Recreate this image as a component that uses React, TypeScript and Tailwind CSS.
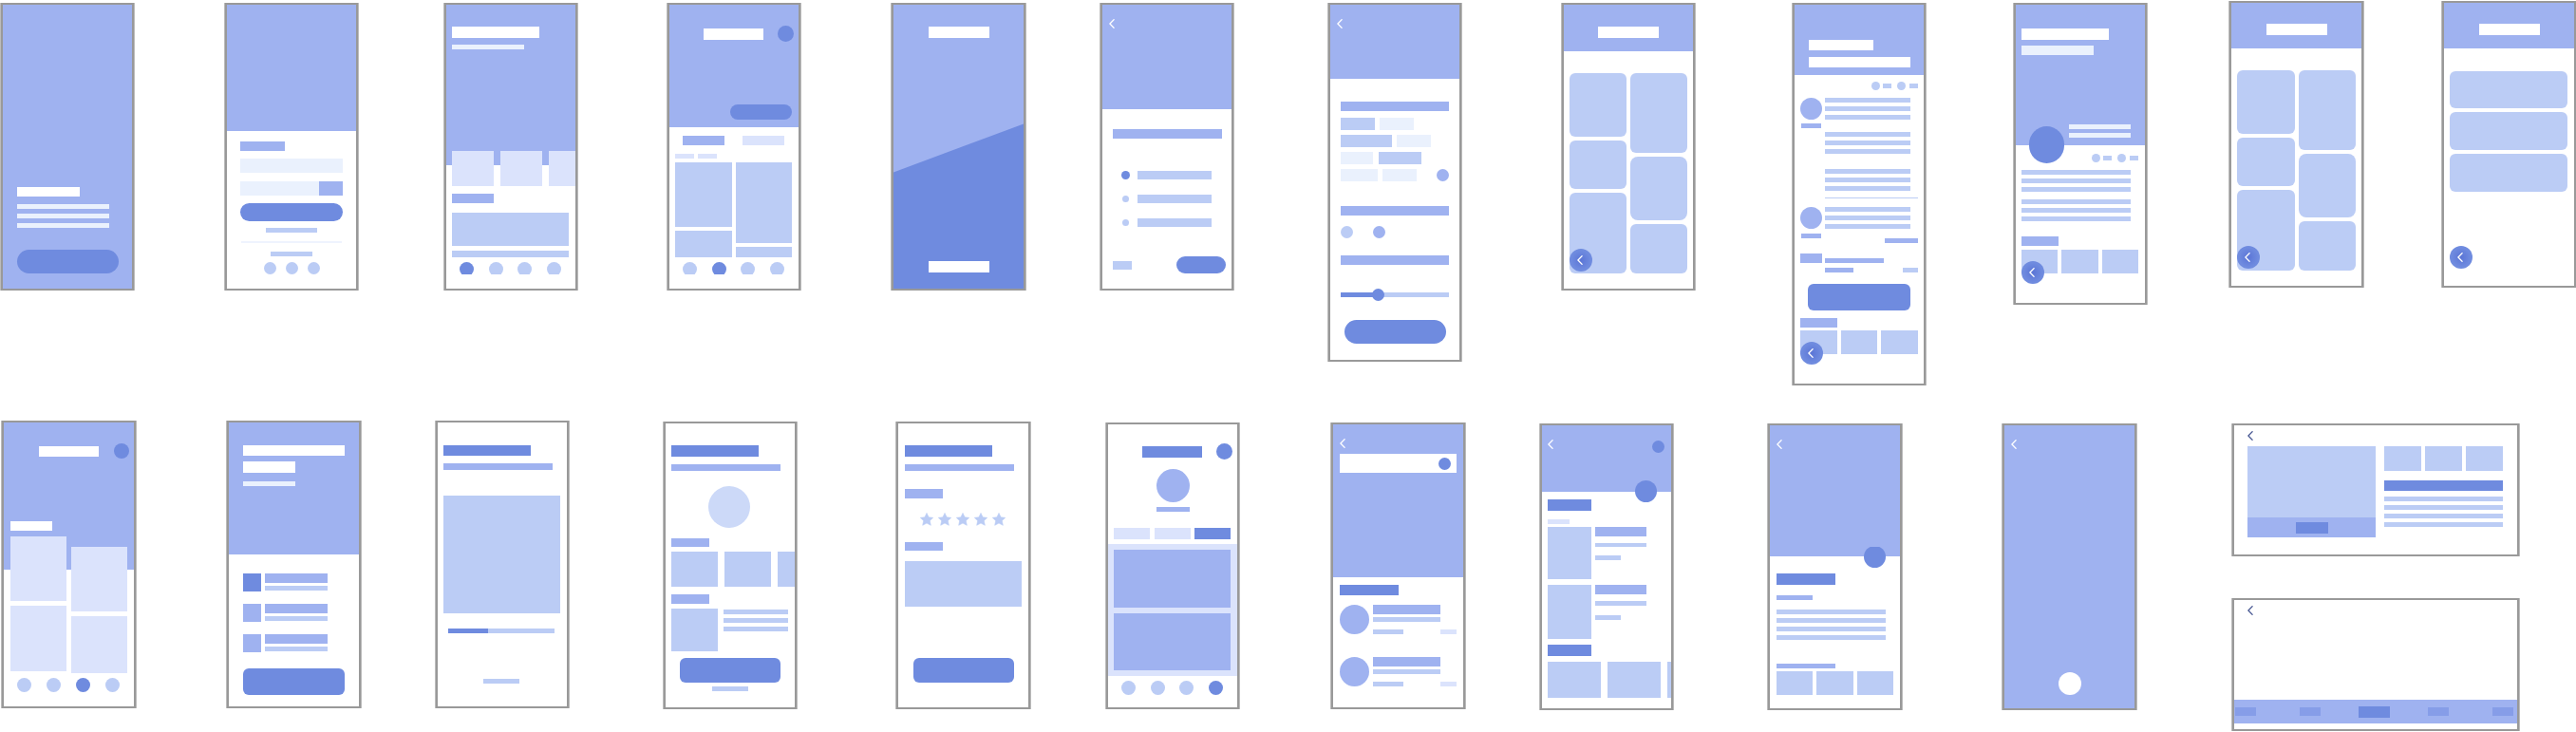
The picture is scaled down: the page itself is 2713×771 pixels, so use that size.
import React from "react";
import clsx from "clsx";

const DARK = "bg-[#6f8bdf]";
const MID = "bg-[#9fb2f0]";
const LIGHT = "bg-[#bbccf5]";
const PALE = "bg-[#dbe3fc]";
const MIST = "bg-[#eaf1fd]";

type BoxProps = { className?: string; children?: React.ReactNode };

function Frame({ className, children }: BoxProps) {
  return (
    <section
      className={clsx(
        "relative flex flex-col overflow-hidden border-2 border-[#999] bg-white shadow-[1px_0_#bbb,-1px_0_#bbb]",
        className,
      )}
    >
      {children}
    </section>
  );
}

/** Placeholder block; tone and size come from the classes. */
function Box({ className, children }: BoxProps) {
  return <div className={clsx("shrink-0", className)}>{children}</div>;
}

function Action({ label, className, children }: BoxProps & { label: string }) {
  return (
    <button type="button" aria-label={label} className={clsx("block shrink-0", className)}>
      {children}
    </button>
  );
}

function Lines({ count, className, bar }: { count: number; className?: string; bar: string }) {
  return (
    <div className={clsx("flex flex-col gap-1", className)}>
      {Array.from({ length: count }, (_, i) => (
        <Box key={i} className={clsx("h-[5px]", bar)} />
      ))}
    </div>
  );
}

function Chevron() {
  return (
    <svg viewBox="0 0 6 10" className="h-2.5 w-1.5" fill="none" stroke="currentColor" strokeWidth="1.3">
      <path d="M5.5 0.3 L0.9 5 L5.5 9.7" />
    </svg>
  );
}

function Back({ className }: { className?: string }) {
  return (
    <Action label="Back" className={clsx("self-start", className)}>
      <Chevron />
    </Action>
  );
}

function FloatingBack({ className }: { className: string }) {
  return (
    <button
      type="button"
      aria-label="Back"
      className={clsx(
        "absolute left-1.5 flex size-6 items-center justify-center rounded-full bg-[radial-gradient(circle,#5b75d6_0%,#6f8bdf_60%)] pr-0.5 text-white",
        className,
      )}
    >
      <Chevron />
    </button>
  );
}

const NAV = ["Home", "Explore", "Activity", "Profile"];

function NavDots({ active, className, clipped }: { active: number; className?: string; clipped?: boolean }) {
  return (
    <nav className={clsx("flex justify-between pr-[15px] pl-3.5", clipped && "h-[13px] overflow-hidden", className)}>
      {NAV.map((name, i) => (
        <Action
          key={name}
          label={name}
          className={clsx("size-[15px] rounded-full", i === active ? DARK : LIGHT)}
        />
      ))}
    </nav>
  );
}

function Thumbs({ className }: { className?: string }) {
  return (
    <div className={clsx("grid grid-cols-3 gap-1", className)}>
      <Box className={LIGHT} />
      <Box className={LIGHT} />
      <Box className={LIGHT} />
    </div>
  );
}

function Meta({ className }: { className?: string }) {
  return (
    <div className={clsx("flex items-center justify-end", className)}>
      <Box className={clsx("size-[9px] rounded-full", LIGHT)} />
      <Box className={clsx("ml-[3px] h-[5px] w-[9px]", LIGHT)} />
      <Box className={clsx("ml-1.5 size-[9px] rounded-full", LIGHT)} />
      <Box className={clsx("ml-1 h-[5px] w-[9px]", LIGHT)} />
    </div>
  );
}

function Welcome() {
  return (
    <Frame className="h-[303px] w-[140px]">
      <div className={clsx("grow pt-48 pl-[15px]", MID)}>
        <Box className="h-2.5 w-[66px] bg-white" />
        <div className="mt-2 flex flex-col gap-[5px]">
          <Box className={clsx("h-[5px] w-[97px]", MIST)} />
          <Box className={clsx("h-[5px] w-[97px]", MIST)} />
          <Box className={clsx("h-[5px] w-[97px]", MIST)} />
        </div>
        <Action label="Get started" className={clsx("mt-[23px] h-[25px] w-[107px] rounded-full", DARK)} />
      </div>
    </Frame>
  );
}

function SignIn() {
  return (
    <Frame className="h-[303px] w-[140px] items-center">
      <Box className={clsx("h-[133px] w-full", MID)} />
      <form className="flex w-[108px] flex-col items-center">
        <Box className={clsx("mt-[11px] h-2.5 w-[47px] self-start", MID)} />
        <input aria-label="Phone" className={clsx("mt-2 h-[15px] w-full", MIST)} />
        <div className="mt-[9px] flex h-[15px] w-full">
          <input aria-label="Code" className={clsx("min-w-0 grow", MIST)} />
          <Action label="Send code" className={clsx("w-[25px]", MID)} />
        </div>
        <Action label="Sign in" className={clsx("mt-2 h-[19px] w-full rounded-full", DARK)} />
        <Box className={clsx("mt-[7px] h-[5px] w-[54px]", LIGHT)} />
        <Box className="mt-[9px] h-0.5 w-[106px] bg-[#eff3fe]" />
        <Box className={clsx("mt-[9px] h-[5px] w-11", LIGHT)} />
        <div className="mt-1.5 flex gap-2.5">
          <Action label="Provider one" className={clsx("size-[13px] rounded-full", LIGHT)} />
          <Action label="Provider two" className={clsx("size-[13px] rounded-full", LIGHT)} />
          <Action label="Provider three" className={clsx("size-[13px] rounded-full", LIGHT)} />
        </div>
      </form>
    </Frame>
  );
}

function Home() {
  return (
    <Frame className="h-[303px] w-[140px]">
      <Box className={clsx("h-[169px] pt-[23px] pl-1.5", MID)}>
        <Box className="h-3 w-[92px] bg-white" />
        <Box className={clsx("mt-[7px] h-[5px] w-[76px]", MIST)} />
      </Box>
      <div className="-mt-[15px] flex gap-[7px] pl-1.5">
        <Box className={clsx("h-[37px] w-11", PALE)} />
        <Box className={clsx("h-[37px] w-11", PALE)} />
        <Box className={clsx("h-[37px] w-11", PALE)} />
      </div>
      <div className="pr-[7px] pl-1.5">
        <Box className={clsx("mt-2 h-2.5 w-11", MID)} />
        <Box className={clsx("mt-2.5 h-[35px]", LIGHT)} />
        <Box className={clsx("mt-[5px] h-[7px]", LIGHT)} />
      </div>
      <NavDots active={0} clipped className="mt-[5px]" />
    </Frame>
  );
}

function Explore() {
  return (
    <Frame className="h-[303px] w-[140px]">
      <Box className={clsx("flex h-[129px] flex-col justify-between px-[7px] pt-[22px] pb-2", MID)}>
        <div className="flex items-center justify-between">
          <Box className="ml-[29px] h-3 w-[63px] bg-white" />
          <Action label="Account" className={clsx("-mr-0.5 size-[17px] rounded-full", DARK)} />
        </div>
        <Action label="Open map" className={clsx("h-4 w-[65px] self-end rounded-full", DARK)} />
      </Box>
      <div className="mt-[9px] flex gap-[19px] pl-3.5">
        <Action label="First tab" className={clsx("h-2.5 w-11", MID)} />
        <Action label="Second tab" className={clsx("h-2.5 w-11", PALE)} />
      </div>
      <div className="mt-[9px] flex gap-1 pl-1.5">
        <Box className={clsx("h-[5px] w-5", PALE)} />
        <Box className={clsx("h-[5px] w-5", PALE)} />
      </div>
      <div className="mt-1 grid grid-cols-2 gap-1 pr-[7px] pl-1.5">
        <div className="flex flex-col gap-1">
          <Box className={clsx("h-[68px]", LIGHT)} />
          <Box className={clsx("h-7", LIGHT)} />
        </div>
        <div className="flex flex-col gap-1">
          <Box className={clsx("h-[85px]", LIGHT)} />
          <Box className={clsx("h-[11px]", LIGHT)} />
        </div>
      </div>
      <NavDots active={1} clipped className="mt-[5px]" />
    </Frame>
  );
}

function Splash() {
  return (
    <Frame className="h-[303px] w-[141px]">
      <div className={clsx("flex grow flex-col items-center justify-between pt-[23px] pb-[17px]", MID)}>
        <div className="absolute inset-0 bg-[#6f8bdf] [clip-path:polygon(0_59%,100%_42%,100%_100%,0_100%)]" />
        <Box className="relative h-3 w-16 bg-white" />
        <Box className="relative h-3 w-16 bg-white" />
      </div>
    </Frame>
  );
}

function Quiz() {
  return (
    <Frame className="h-[303px] w-[140px]">
      <Box className={clsx("h-[110px] pt-[15px] pl-[7px] text-white", MID)}>
        <Back />
      </Box>
      <Box className={clsx("mt-[21px] ml-[11px] h-2.5 w-[115px]", MID)} />
      <div className="mt-[34px] flex flex-col gap-4 pl-5">
        {[true, false, false].map((on, i) => (
          <label key={i} className="flex h-[9px] items-center">
            <span className="flex w-[9px] justify-center">
              <input
                type="radio"
                name="answer"
                aria-label={"Answer " + (i + 1)}
                defaultChecked={on}
                className="size-[7px] appearance-none rounded-full bg-[#bbccf5] checked:size-[9px] checked:bg-[#6f8bdf]"
              />
            </span>
            <span className={clsx("ml-2 h-[9px] w-[78px]", LIGHT)} />
          </label>
        ))}
      </div>
      <div className="mt-[31px] flex items-center justify-between pr-1.5 pl-[11px]">
        <Action label="Skip" className={clsx("h-[9px] w-5", LIGHT)} />
        <Action label="Next" className={clsx("h-[18px] w-[52px] rounded-full", DARK)} />
      </div>
    </Frame>
  );
}

function Filters() {
  return (
    <Frame className="h-[378px] w-[140px]">
      <Box className={clsx("h-[78px] pt-[15px] pl-[7px] text-white", MID)}>
        <Back />
      </Box>
      <div className="flex flex-col px-[11px] pt-6">
        <Box className={clsx("h-2.5", MID)} />
        <div className="mt-[7px] flex flex-col gap-[5px]">
          <div className="flex h-[13px] gap-[5px]">
            <Box className={clsx("w-9", LIGHT)} />
            <Box className={clsx("w-9", MIST)} />
          </div>
          <div className="flex h-[13px] gap-[5px]">
            <Box className={clsx("w-[54px]", LIGHT)} />
            <Box className={clsx("w-9", MIST)} />
          </div>
          <div className="flex h-[13px] gap-1.5">
            <Box className={clsx("w-[34px]", MIST)} />
            <Box className={clsx("w-[45px]", LIGHT)} />
          </div>
          <div className="flex h-[13px] gap-[5px]">
            <Box className={clsx("w-[39px]", MIST)} />
            <Box className={clsx("w-9", MIST)} />
            <Action label="More" className={clsx("ml-auto w-[13px] rounded-full", MID)} />
          </div>
        </div>
        <Box className={clsx("mt-[26px] h-2.5", MID)} />
        <div className="mt-[11px] flex gap-[21px]">
          <Action label="Option one" className={clsx("size-[13px] rounded-full", LIGHT)} />
          <Action label="Option two" className={clsx("size-[13px] rounded-full", MID)} />
        </div>
        <Box className={clsx("mt-[18px] h-2.5", MID)} />
        <input
          type="range"
          aria-label="Distance"
          defaultValue={33}
          className="mt-[25px] block h-[13px] w-full appearance-none bg-transparent [&::-webkit-slider-runnable-track]:h-[5px] [&::-webkit-slider-runnable-track]:bg-[linear-gradient(90deg,#6f8bdf_35%,#bbccf5_35%)] [&::-webkit-slider-thumb]:-mt-1 [&::-webkit-slider-thumb]:size-[13px] [&::-webkit-slider-thumb]:appearance-none [&::-webkit-slider-thumb]:rounded-full [&::-webkit-slider-thumb]:bg-[#6f8bdf]"
        />
        <Action label="Apply" className={clsx("mt-5 h-[25px] w-[107px] self-center rounded-full", DARK)} />
      </div>
    </Frame>
  );
}

function Gallery({ className, hero, fab }: { className: string; hero: string; fab: string }) {
  return (
    <Frame className={className}>
      <Box className={clsx("flex justify-center", hero, MID)}>
        <Box className="h-3 w-16 bg-white" />
      </Box>
      <div className="mt-[23px] grid grid-cols-2 gap-1 px-1.5">
        <div className="flex flex-col gap-1">
          <Box className={clsx("h-[67px] rounded-md", LIGHT)} />
          <Box className={clsx("h-[51px] rounded-md", LIGHT)} />
          <Box className={clsx("h-[85px] rounded-md", LIGHT)} />
        </div>
        <div className="flex flex-col gap-1">
          <Box className={clsx("h-[84px] rounded-md", LIGHT)} />
          <Box className={clsx("h-[67px] rounded-lg", LIGHT)} />
          <Box className={clsx("h-[52px] rounded-md", LIGHT)} />
        </div>
      </div>
      <FloatingBack className={fab} />
    </Frame>
  );
}

function Collection() {
  return (
    <Frame className="h-[302px] w-[141px]">
      <Box className={clsx("flex h-12 justify-center pt-[22px]", MID)}>
        <Box className="h-3 w-16 bg-white" />
      </Box>
      <div className="mt-6 flex flex-col gap-1 pr-[7px] pl-1.5">
        <Box className={clsx("h-[39px] rounded-md", LIGHT)} />
        <Box className={clsx("h-10 rounded-md", LIGHT)} />
        <Box className={clsx("h-10 rounded-md", LIGHT)} />
      </div>
      <FloatingBack className="bottom-[18px]" />
    </Frame>
  );
}

function Itinerary() {
  return (
    <Frame className="h-[403px] w-[140px]">
      <Box className={clsx("h-[74px] pt-[37px] pl-[15px]", MID)}>
        <Box className="h-[11px] w-[68px] bg-white" />
        <Box className="mt-[7px] h-[11px] w-[107px] bg-white" />
      </Box>
      <div className="flex flex-col px-1.5">
        <Meta className="mt-[7px]" />
        <div className="mt-2 flex gap-[3px]">
          <div className="flex w-[23px] flex-col items-center">
            <Box className={clsx("size-[23px] rounded-full", MID)} />
            <Box className={clsx("mt-1 h-[5px] w-[21px]", MID)} />
          </div>
          <div>
            <Lines count={3} bar={clsx("w-[90px]", LIGHT)} />
            <Lines count={3} bar={clsx("w-[90px]", LIGHT)} className="mt-[13px]" />
            <Lines count={3} bar={clsx("w-[90px]", LIGHT)} className="mt-4" />
            <Box className={clsx("mt-[7px] h-px w-[98px]", LIGHT)} />
          </div>
        </div>
        <div className="mt-[9px] flex gap-[3px]">
          <div className="flex w-[23px] flex-col items-center">
            <Box className={clsx("size-[23px] rounded-full", MID)} />
            <Box className={clsx("mt-[5px] h-[5px] w-[21px]", MID)} />
          </div>
          <div className="flex grow flex-col">
            <Lines count={3} bar={clsx("w-[90px]", LIGHT)} />
            <Box className={clsx("mt-2.5 h-[5px] w-[35px] self-end", MID)} />
          </div>
        </div>
        <div className="mt-[11px] flex gap-[3px]">
          <Box className={clsx("h-2.5 w-[23px]", MID)} />
          <div className="grow pt-[5px]">
            <Box className={clsx("h-[5px] w-[62px]", MID)} />
            <div className="mt-[5px] flex justify-between">
              <Box className={clsx("h-[5px] w-[30px]", MID)} />
              <Box className={clsx("h-[5px] w-4", LIGHT)} />
            </div>
          </div>
        </div>
        <Action label="Book" className={clsx("mt-3 h-7 w-[108px] self-center rounded-md", DARK)} />
        <Box className={clsx("mt-2 h-2.5 w-[39px]", MID)} />
        <Thumbs className="mt-[3px] h-[25px]" />
      </div>
      <FloatingBack className="bottom-5" />
    </Frame>
  );
}

function Profile() {
  return (
    <Frame className="h-[318px] w-[140px]">
      <Box className={clsx("h-[148px] pt-[25px] pl-1.5", MID)}>
        <Box className="h-3 w-[92px] bg-white" />
        <Box className={clsx("mt-1.5 h-2.5 w-[76px]", MIST)} />
        <div className="mt-[73px] flex gap-[5px] pl-2">
          <Box className={clsx("mt-0.5 h-[39px] w-[37px] rounded-full", DARK)} />
          <Lines count={2} bar={clsx("w-[65px]", MIST)} />
        </div>
      </Box>
      <div className="pr-[7px] pl-1.5">
        <Meta className="mt-[9px]" />
        <Lines count={3} bar={clsx("w-[115px]", LIGHT)} className="mt-2" />
        <Lines count={3} bar={clsx("w-[115px]", LIGHT)} className="mt-2" />
        <Box className={clsx("mt-4 h-2.5 w-[39px]", MID)} />
        <Thumbs className="mt-1 h-[25px]" />
      </div>
      <FloatingBack className="bottom-5" />
    </Frame>
  );
}

function Feed() {
  return (
    <Frame className="h-[303px] w-[141px]">
      <Box className={clsx("h-[155px] pt-[22px] pl-[7px]", MID)}>
        <div className="flex items-center justify-between pr-[5px]">
          <Box className="ml-[30px] h-[11px] w-[63px] bg-white" />
          <Action label="Account" className={clsx("size-4 rounded-full", DARK)} />
        </div>
        <Box className="mt-[66px] h-2.5 w-11 bg-white" />
      </Box>
      <div className="-mt-[35px] grid grid-cols-2 gap-[5px] px-[7px]">
        <div className="flex flex-col gap-[5px]">
          <Box className={clsx("h-[68px]", PALE)} />
          <Box className={clsx("h-[69px]", PALE)} />
        </div>
        <div className="flex flex-col gap-[5px] pt-[11px]">
          <Box className={clsx("h-[68px]", PALE)} />
          <Box className={clsx("h-[60px]", PALE)} />
        </div>
      </div>
      <NavDots active={2} className="mt-[5px]" />
    </Frame>
  );
}

function Checklist() {
  return (
    <Frame className="h-[303px] w-[141px]">
      <Box className={clsx("h-[139px] pt-6 pl-[15px]", MID)}>
        <Box className="h-[11px] w-[107px] bg-white" />
        <Box className="mt-1.5 h-3 w-[55px] bg-white" />
        <Box className={clsx("mt-[9px] h-[5px] w-[55px]", MIST)} />
      </Box>
      <ul className="mt-5 flex flex-col gap-[13px] px-[15px]">
        {[DARK, MID, MID].map((tone, i) => (
          <li key={i} className="flex gap-1">
            <Box className={clsx("size-[19px]", tone)} />
            <div>
              <Box className={clsx("h-2.5 w-[66px]", MID)} />
              <Box className={clsx("mt-[3px] h-[5px] w-[66px]", LIGHT)} />
            </div>
          </li>
        ))}
      </ul>
      <Action label="Continue" className={clsx("mt-[17px] ml-[15px] h-7 w-[107px] rounded-md", DARK)} />
    </Frame>
  );
}

function Player() {
  return (
    <Frame className="h-[303px] w-[140px] px-1.5 pt-6">
      <Box className={clsx("h-[11px] w-[92px]", DARK)} />
      <Box className={clsx("mt-2 h-[7px] w-[115px]", MID)} />
      <Box className={clsx("mt-[27px] h-[124px] w-[123px]", LIGHT)} />
      <Box className={clsx("mt-4 ml-[5px] h-[5px] w-28", LIGHT)}>
        <Box className={clsx("h-full w-[42px]", DARK)} />
      </Box>
      <Box className={clsx("mt-12 ml-[42px] h-[5px] w-[38px]", LIGHT)} />
    </Frame>
  );
}

function Booking() {
  return (
    <Frame className="mt-px h-[303px] w-[140px] pt-[23px] pl-1.5">
      <Box className={clsx("h-3 w-[92px]", DARK)} />
      <Box className={clsx("mt-2 h-[7px] w-[115px]", MID)} />
      <Box className="mt-4 ml-[39px] size-11 rounded-full bg-[#ccd9f8]" />
      <Box className={clsx("mt-[11px] h-[9px] w-10", MID)} />
      <div className="mt-[5px] flex gap-[7px]">
        <Box className={clsx("h-[37px] w-[49px]", LIGHT)} />
        <Box className={clsx("h-[37px] w-[49px]", LIGHT)} />
        <Box className={clsx("h-[37px] w-[49px]", LIGHT)} />
      </div>
      <Box className={clsx("mt-2 h-2.5 w-10", MID)} />
      <div className="mt-[5px] flex gap-1.5">
        <Box className={clsx("h-[45px] w-[49px]", LIGHT)} />
        <Lines count={3} bar={clsx("w-[68px]", LIGHT)} className="mt-px" />
      </div>
      <div className="flex w-[124px] flex-col items-center">
        <Action label="Reserve" className={clsx("mt-[7px] h-[26px] w-[106px] rounded-md", DARK)} />
        <Box className={clsx("mt-1 h-[5px] w-[38px]", LIGHT)} />
      </div>
    </Frame>
  );
}

function Star() {
  return (
    <svg viewBox="0 0 14 14" className="size-3.5" fill="#bbccf5" stroke="#bbccf5" strokeWidth="0.6" strokeLinejoin="round">
      <path d="M7 0.4 L9.1 4.8 L13.7 5.3 L10.3 8.5 L11.3 13.3 L7 11 L2.7 13.3 L3.7 8.5 L0.3 5.3 L4.9 4.8 Z" />
    </svg>
  );
}

function Review() {
  return (
    <Frame className="mt-px h-[303px] w-[141px] px-[7px] pt-[23px]">
      <Box className={clsx("h-3 w-[92px]", DARK)} />
      <Box className={clsx("mt-2 h-[7px] w-[115px]", MID)} />
      <Box className={clsx("mt-[19px] h-2.5 w-10", MID)} />
      <div className="mt-[15px] flex justify-center gap-[5px] pr-0.5">
        {[1, 2, 3, 4, 5].map((n) => (
          <Action key={n} label={n + " stars"}>
            <Star />
          </Action>
        ))}
      </div>
      <Box className={clsx("mt-[17px] h-[9px] w-10", MID)} />
      <textarea aria-label="Review" className={clsx("mt-[11px] block h-12 w-full resize-none", LIGHT)} />
      <Action label="Submit" className={clsx("mt-[54px] ml-[9px] h-[26px] w-[106px] rounded-md", DARK)} />
    </Frame>
  );
}

function Account() {
  return (
    <Frame className="mt-0.5 h-[302px] w-[140px] pt-5">
      <div className="flex items-center justify-between pr-[5px]">
        <Box className={clsx("ml-9 h-3 w-[63px]", DARK)} />
        <Action label="Settings" className={clsx("size-[17px] rounded-full", DARK)} />
      </div>
      <Box className={clsx("mt-2.5 size-[35px] self-center rounded-full", MID)} />
      <Box className={clsx("mt-[5px] h-[5px] w-[35px] self-center", MID)} />
      <div className="mt-[17px] flex justify-between pr-[7px] pl-1.5">
        <Action label="Saved" className={clsx("h-3 w-[38px]", PALE)} />
        <Action label="Liked" className={clsx("h-3 w-[38px]", PALE)} />
        <Action label="Posts" className={clsx("h-3 w-[38px]", DARK)} />
      </div>
      <Box className={clsx("mt-[5px] flex h-[139px] flex-col gap-1.5 py-1.5 pr-[7px] pl-1.5", PALE)}>
        <div className={clsx("grow", MID)} />
        <div className={clsx("grow", MID)} />
      </Box>
      <NavDots active={3} className="mt-[5px]" />
    </Frame>
  );
}

function Search() {
  return (
    <Frame className="mt-0.5 h-[302px] w-[141px]">
      <Box className={clsx("h-[161px] px-[7px] pt-[15px] text-white", MID)}>
        <Back />
        <div className="mt-1.5 flex h-5 items-center bg-white pr-1.5">
          <input type="search" aria-label="Search" className="h-full min-w-0 grow bg-white" />
          <Action label="Find" className={clsx("size-[13px] rounded-full", DARK)} />
        </div>
      </Box>
      <div className="px-[7px]">
        <Box className={clsx("mt-2 h-[11px] w-[62px]", DARK)} />
        <div className="mt-2.5 flex flex-col gap-6">
          {[0, 1].map((row) => (
            <div key={row} className="flex gap-1">
              <Box className={clsx("size-[31px] rounded-full", MID)} />
              <div className="grow">
                <Box className={clsx("h-2.5 w-[71px]", MID)} />
                <Box className={clsx("mt-[3px] h-[5px] w-[71px]", LIGHT)} />
                <div className="mt-2 flex justify-between">
                  <Box className={clsx("h-[5px] w-8", LIGHT)} />
                  <Box className={clsx("h-[5px] w-[17px]", PALE)} />
                </div>
              </div>
            </div>
          ))}
        </div>
      </div>
    </Frame>
  );
}

function Listing() {
  return (
    <Frame className="mt-[3px] h-[302px] w-[140px]">
      <Box className={clsx("flex h-[70px] items-start justify-between pt-[15px] pr-[7px] pl-1.5 text-white", MID)}>
        <Back />
        <Action label="Share" className={clsx("mt-px size-[13px] rounded-full", DARK)} />
      </Box>
      <button
        type="button"
        aria-label="Favourite"
        className="absolute top-[58px] right-[15px] size-[23px] rounded-full bg-[#6f8bdf]"
      />
      <div className="flex flex-col pl-1.5">
        <Box className={clsx("mt-2 h-3 w-[46px]", DARK)} />
        <Box className={clsx("mt-[9px] h-[5px] w-[23px]", PALE)} />
        <div className="mt-[3px] flex gap-1">
          <Box className={clsx("h-[55px] w-[46px]", LIGHT)} />
          <div>
            <Box className={clsx("h-2.5 w-[54px]", MID)} />
            <Box className={clsx("mt-[7px] h-1 w-[54px]", LIGHT)} />
            <Box className={clsx("mt-[9px] h-[5px] w-[27px]", LIGHT)} />
          </div>
        </div>
        <div className="mt-1.5 flex gap-1">
          <Box className={clsx("h-[57px] w-[46px]", LIGHT)} />
          <div>
            <Box className={clsx("h-2.5 w-[54px]", MID)} />
            <Box className={clsx("mt-[7px] h-[5px] w-[54px]", LIGHT)} />
            <Box className={clsx("mt-2.5 h-[5px] w-[27px]", LIGHT)} />
          </div>
        </div>
        <Box className={clsx("mt-1.5 h-3 w-[46px]", DARK)} />
        <div className="mt-1.5 flex gap-[7px]">
          <Box className={clsx("h-[38px] w-14", LIGHT)} />
          <Box className={clsx("h-[38px] w-14", LIGHT)} />
          <Box className={clsx("h-[38px] w-14", LIGHT)} />
        </div>
      </div>
    </Frame>
  );
}

function Detail() {
  return (
    <Frame className="mt-[3px] h-[302px] w-[141px]">
      <Box className={clsx("h-[138px] pt-[15px] pl-[7px] text-white", MID)}>
        <Back />
      </Box>
      <button
        type="button"
        aria-label="Favourite"
        className="absolute top-[127px] right-[15px] size-[23px] rounded-full bg-[#6f8bdf] [clip-path:inset(1px_0_0)]"
      />
      <div className="px-[7px]">
        <Box className={clsx("mt-[18px] h-3 w-[62px]", DARK)} />
        <Box className={clsx("mt-[11px] h-[5px] w-[38px]", MID)} />
        <Lines count={4} bar={clsx("w-[115px]", LIGHT)} className="mt-2.5" />
        <Box className={clsx("mt-[25px] h-[5px] w-[62px]", MID)} />
        <Thumbs className="mt-[3px] h-[25px]" />
      </div>
    </Frame>
  );
}

function Camera() {
  return (
    <Frame className="mt-[3px] h-[302px] w-[141px]">
      <div className={clsx("flex grow flex-col justify-between pt-[15px] pb-3.5 text-white", MID)}>
        <Back className="ml-[7px]" />
        <Action label="Take photo" className="size-6 self-center rounded-full bg-white" />
      </div>
    </Frame>
  );
}

function WideDetail() {
  return (
    <Frame className="h-[140px] w-[302px] px-3.5 pt-1.5">
      <Back className="text-[#4a5a94]" />
      <div className="mt-1.5 flex justify-between pr-px">
        <Box className={clsx("flex h-24 w-[135px] items-end", LIGHT)}>
          <div className={clsx("flex h-[21px] w-full items-center justify-center", MID)}>
            <Action label="Play" className={clsx("h-3 w-[34px]", DARK)} />
          </div>
        </Box>
        <div className="w-[125px]">
          <Thumbs className="h-[26px]" />
          <Box className={clsx("mt-2.5 h-[11px]", DARK)} />
          <Lines count={4} bar={LIGHT} className="mt-1.5" />
        </div>
      </div>
    </Frame>
  );
}

function WideViewer() {
  const chip = "h-[9px] w-[22px] bg-[#869de8]";
  return (
    <Frame className="h-[140px] w-[302px] justify-between pt-1.5 pb-1.5">
      <Back className="ml-3.5 text-[#4a5a94]" />
      <nav className={clsx("flex h-[25px] items-center justify-between pr-1 pl-px", MID)}>
        <Action label="First" className={chip} />
        <div className="flex items-center gap-10">
          <Action label="Previous" className={chip} />
          <Action label="Current" className={clsx("h-3 w-[33px]", DARK)} />
          <Action label="Next" className={chip} />
        </div>
        <Action label="Last" className={chip} />
      </nav>
    </Frame>
  );
}

export default function App() {
  return (
    <main className="overflow-hidden bg-white pb-px font-['Inter',sans-serif]">
      <div className="grid grid-cols-[236fr_231fr_235fr_236fr_220fr_240fr_246fr_243fr_233fr_227fr_224fr_141fr] items-start pt-[3px] pl-px">
        <Welcome />
        <SignIn />
        <Home />
        <Explore />
        <Splash />
        <Quiz />
        <Filters />
        <Gallery className="h-[303px] w-[140px]" hero="h-[49px] pt-[23px]" fab="bottom-[18px]" />
        <Itinerary />
        <Profile />
        <div className="-mt-0.5">
          <Gallery className="h-[302px] w-[141px]" hero="h-12 pt-[22px]" fab="bottom-[18px]" />
        </div>
        <div className="-mt-0.5">
          <Collection />
        </div>
      </div>
      <div className="mt-[37px] grid grid-cols-[237fr_220fr_240fr_245fr_221fr_237fr_220fr_240fr_247fr_242fr_362fr] items-start pl-0.5">
        <Feed />
        <Checklist />
        <Player />
        <Booking />
        <Review />
        <Account />
        <Search />
        <Listing />
        <Detail />
        <Camera />
        <div className="mt-[3px] flex flex-col gap-11">
          <WideDetail />
          <WideViewer />
        </div>
      </div>
    </main>
  );
}
